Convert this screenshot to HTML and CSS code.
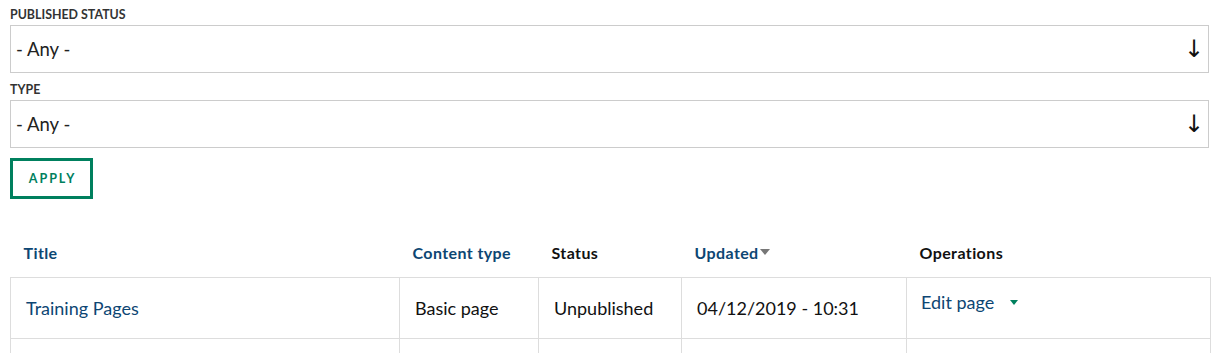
FILE: index.html
```html
<!DOCTYPE html>
<html>
<head>
<meta charset="utf-8">
<link rel="stylesheet" href="styles.css">
</head>
<body>
<form class="filters">
  <div class="form-item">
    <label class="label">PUBLISHED STATUS</label>
    <div class="select"><span>- Any -</span><span class="arrow">↓</span></div>
  </div>
  <div class="form-item">
    <label class="label">TYPE</label>
    <div class="select"><span>- Any -</span><span class="arrow">↓</span></div>
  </div>
  <div class="actions"><button type="button" class="apply">APPLY</button></div>
</form>
<table class="content-table">
  <colgroup>
    <col class="c-title"><col class="c-type"><col class="c-status"><col class="c-updated"><col class="c-ops">
  </colgroup>
  <thead>
    <tr>
      <th class="link">Title</th>
      <th class="link">Content type</th>
      <th>Status</th>
      <th class="link">Updated<span class="sort"></span></th>
      <th>Operations</th>
    </tr>
  </thead>
  <tbody>
    <tr>
      <td class="link">Training Pages</td>
      <td>Basic page</td>
      <td>Unpublished</td>
      <td>04/12/2019 - 10:31</td>
      <td class="ops"><span class="link">Edit page</span><span class="caret"></span></td>
    </tr>
    <tr class="next">
      <td></td>
      <td></td>
      <td></td>
      <td></td>
      <td></td>
    </tr>
  </tbody>
</table>
</body>
</html>
```
FILE: styles.css
```css
html, body {
  margin: 0;
  background: #fff;
}
body {
  padding: 0 10px;
  font-family: "Lato", "Liberation Sans", sans-serif;
  color: #111;
  overflow: hidden;
}
.filters {
  margin: 0;
}
.form-item {
  display: flex;
  flex-direction: column;
}
.label {
  font-size: 12.4px;
  font-weight: 700;
  color: #333;
  line-height: 14px;
  padding-top: 8px;
  height: 17px;
}
.select {
  height: 46px;
  border: 1px solid #cccccc;
  display: flex;
  align-items: center;
  justify-content: space-between;
  padding: 0 4px 0 5px;
  font-size: 18.5px;
  color: #222;
}
.arrow {
  font-family: "DejaVu Sans", sans-serif;
  font-size: 24px;
  color: #111;
  margin-top: 0;
}
.form-item + .form-item .label {
  padding-top: 10px;
  height: 17px;
}
.actions {
  padding-top: 10px;
}
.apply {
  width: 83px;
  height: 41px;
  border: 3px solid #00805e;
  background: #fff;
  color: #00805e;
  font-family: "Lato", sans-serif;
  font-weight: 700;
  font-size: 12.5px;
  letter-spacing: 2px;
  padding: 0 0 0 2px;
  cursor: pointer;
}
.content-table {
  margin-top: 31px;
  width: 1200px;
  border-collapse: collapse;
  table-layout: fixed;
}
.c-title { width: 389px; }
.c-type { width: 139px; }
.c-status { width: 143px; }
.c-updated { width: 225px; }
.c-ops { width: 304px; }
th {
  text-align: left;
  font-size: 16px;
  font-weight: 700;
  letter-spacing: 0.4px;
  color: #111;
  padding: 0 13px 2px;
  height: 47px;
  vertical-align: middle;
  box-sizing: border-box;
}
th.link { color: #0d4673; }
.sort {
  display: inline-block;
  width: 0;
  height: 0;
  border-left: 5px solid transparent;
  border-right: 5px solid transparent;
  border-top: 6px solid #777;
  margin-left: 1px;
  vertical-align: 4px;
}
td {
  border: 1px solid #dddddd;
  height: 61px;
  padding: 0 15px;
  font-size: 18px;
  color: #111;
  vertical-align: middle;
  box-sizing: border-box;
}
td.link, .link { color: #0d4673; }
td.ops {
  vertical-align: top;
  padding-top: 13px;
  padding-left: 14px;
}
.caret {
  display: inline-block;
  width: 0;
  height: 0;
  border-left: 4px solid transparent;
  border-right: 4px solid transparent;
  border-top: 5px solid #00805e;
  margin-left: 16px;
  vertical-align: 4px;
}
```
